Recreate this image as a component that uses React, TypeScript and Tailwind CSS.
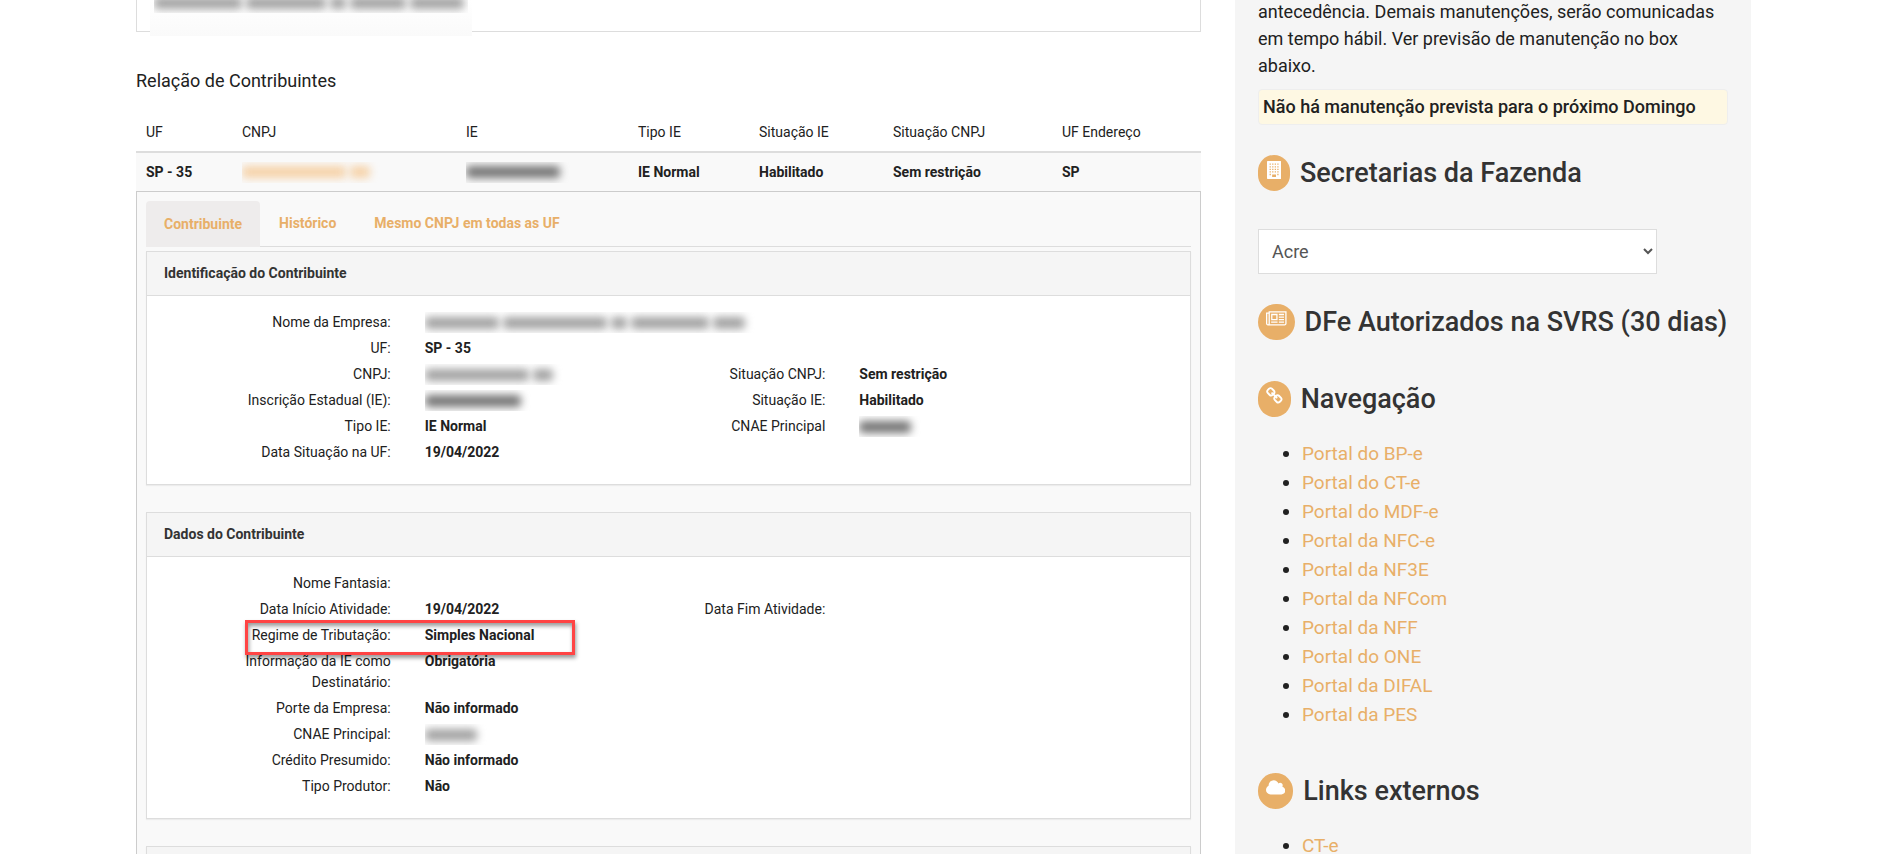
import React from 'react';

const columns = ['UF', 'CNPJ', 'IE', 'Tipo IE', 'Situação IE', 'Situação CNPJ', 'UF Endereço'];

const portals = [
  'Portal do BP-e',
  'Portal do CT-e',
  'Portal do MDF-e',
  'Portal da NFC-e',
  'Portal da NF3E',
  'Portal da NFCom',
  'Portal da NFF',
  'Portal do ONE',
  'Portal da DIFAL',
  'Portal da PES',
];

// Sidebar icons, all on the same 1792 unit tall grid
const icons = {
  building: {
    viewBox: '0 0 1408 1792',
    path: 'M64 0h1280q64 0 64 64v1664q0 64-64 64h-1280q-64 0-64-64v-1664q0-64 64-64zM256 256h128v128h-128zM512 256h128v128h-128zM768 256h128v128h-128zM1024 256h128v128h-128zM256 512h128v128h-128zM512 512h128v128h-128zM768 512h128v128h-128zM1024 512h128v128h-128zM256 768h128v128h-128zM512 768h128v128h-128zM768 768h128v128h-128zM1024 768h128v128h-128zM256 1024h128v128h-128zM512 1024h128v128h-128zM768 1024h128v128h-128zM1024 1024h128v128h-128zM256 1280h128v128h-128zM1024 1280h128v128h-128zM512 1344h384v256h-384z',
  },
  newspaper: {
    viewBox: '0 0 2048 1792',
    path: 'M1024 512h-384v384h384v-384zm128 640v128h-640v-128h640zm0-768v640h-640v-640h640zm640 768v128h-512v-128h512zm0-256v128h-512v-128h512zm0-256v128h-512v-128h512zm0-256v128h-512v-128h512zm-1536 960v-960h-128v960q0 26 19 45t45 19 45-19 19-45zm1664 0v-1088h-1536v1088q0 33-11 64h1483q26 0 45-19t19-45zm128-1216v1216q0 80-56 136t-136 56h-1664q-80 0-136-56t-56-136v-1088h256v-128h1792z',
  },
  link: {
    viewBox: '64 0 1664 1792',
    path: 'M1520 1216q0-40-28-68l-208-208q-28-28-68-28-42 0-72 32 3 3 19 18.5t21.5 21.5 15 19 13 25.5 3.5 27.5q0 40-28 68t-68 28q-15 0-27.5-3.5t-25.5-13-19-15-21.5-21.5-18.5-19q-33 31-33 73 0 40 28 68l206 207q27 27 68 27 40 0 68-26l147-146q28-28 28-67zm-703-705q0-40-28-68l-206-207q-28-28-68-28-39 0-68 27l-147 146q-28 28-28 67 0 40 28 68l208 208q27 27 68 27 42 0 72-31-3-3-19-18.5t-21.5-21.5-15-19-13-25.5-3.5-27.5q0-40 28-68t68-28q15 0 27.5 3.5t25.5 13 19 15 21.5 21.5 18.5 19q33-31 33-73zm895 705q0 120-85 203l-147 146q-83 83-203 83-121 0-204-85l-206-207q-83-83-83-203 0-123 88-209l-88-88q-86 88-208 88-120 0-204-84l-208-208q-84-84-84-204t85-203l147-146q83-83 203-83 121 0 204 85l206 207q83 83 83 203 0 123-88 209l88 88q86-88 208-88 120 0 204 84l208 208q84 84 84 204z',
  },
  cloud: {
    viewBox: '64 0 1920 1792',
    path: 'M1984 1152q0 159-112.5 271.5t-271.5 112.5h-1088q-185 0-316.5-131.5t-131.5-316.5q0-132 71-241.5t187-163.5q-2-28-2-43 0-212 150-362t362-150q158 0 286.5 88t187.5 230q70-62 166-62 106 0 181 75t75 181q0 75-41 138 129 30 213 134.5t84 239.5z',
  },
};

// Private values are drawn as blurred blocks, one block per word
const Redacted = ({ words, color = 'bg-neutral-500' }: { words: string[]; color?: string }) => (
  <span aria-hidden="true" className="flex h-[21px] items-center gap-1 overflow-hidden">
    {words.map((width, index) => (
      <span key={index} className={`h-3 rounded-sm blur-[4px] ${width} ${color}`} />
    ))}
  </span>
);

type FieldProps = {
  label: string;
  value?: React.ReactNode;
  label2?: string;
  value2?: React.ReactNode;
};

const Field = ({ label, value, label2, value2 }: FieldProps) => (
  <div className="mb-[5px] grid grid-cols-12">
    <dt className="col-span-3 pr-[17px] pl-10 text-right">{label}</dt>
    <dd className={`pl-[17px] font-bold ${label2 ? 'col-span-3' : 'col-span-9'}`}>{value}</dd>
    {label2 && <dt className="col-span-2 pr-[17px] text-right">{label2}</dt>}
    {label2 && <dd className="col-span-4 pl-[17px] font-bold">{value2}</dd>}
  </div>
);

const Panel = ({ title, children }: { title: string; children?: React.ReactNode }) => (
  <section className="mb-[27px] border border-[#dddddd] bg-white shadow-[0_1px_1px_rgba(0,0,0,0.05)]">
    <h3 className="border-b border-[#dddddd] bg-[#f5f5f5] px-[17px] py-[11px] font-bold text-[#333333]">
      {title}
    </h3>
    <dl className="py-4">{children}</dl>
  </section>
);

const SideHeading = ({ icon, children }: { icon: keyof typeof icons; children: React.ReactNode }) => (
  <h2 className="flex items-center gap-[10px] text-[27px] leading-9 font-medium whitespace-nowrap text-[#333333]">
    <span className="flex min-w-8 shrink-0 justify-center rounded-full bg-[#e8af68] px-2 pt-[6px] pb-[12px] text-white">
      <svg viewBox={icons[icon].viewBox} className="h-[18px] w-auto fill-current" fillRule="evenodd">
        <path d={icons[icon].path} />
      </svg>
    </span>
    {children}
  </h2>
);

const App = () => {
  return (
    <div className="flex h-screen items-start gap-[34px] overflow-hidden bg-white pr-[139px] pl-[136px] font-[Roboto,sans-serif] text-[#212121]">
      <main className="min-w-0 flex-1 text-[14px] leading-[21px]">
        {/* Search result box */}
        <div className="h-8 border border-t-0 border-[#dddddd] px-[13px]">
          <div className="flow-root h-9 w-[322px] bg-gradient-to-b from-white to-[#fafafa] px-1">
            <div className="-mt-2">
              <Redacted words={['w-[88px]', 'w-[80px]', 'w-4', 'w-[56px]', 'w-[54px]']} color="bg-neutral-400" />
            </div>
          </div>
        </div>

        <h1 className="mt-9 mb-7 text-[18px] leading-[26px]">Relação de Contribuintes</h1>

        <table className="w-full table-fixed text-left">
          <colgroup>
            <col className="w-[96px]" />
            <col className="w-[224px]" />
            <col className="w-[172px]" />
            <col className="w-[121px]" />
            <col className="w-[134px]" />
            <col className="w-[169px]" />
            <col className="w-[149px]" />
          </colgroup>
          <thead>
            <tr className="border-b-2 border-[#dddddd]">
              {columns.map((column) => (
                <th key={column} className="px-[10px] pb-2 font-normal">
                  {column}
                </th>
              ))}
            </tr>
          </thead>
          <tbody>
            <tr className="h-[39px] bg-[#f9f9f9] font-bold">
              <td className="px-[10px]">SP - 35</td>
              <td className="px-[10px]">
                <Redacted words={['w-[104px]', 'w-5']} color="bg-[#f6d2a8]" />
              </td>
              <td className="px-[10px]">
                <Redacted words={['w-[94px]']} />
              </td>
              <td className="px-[10px]">IE Normal</td>
              <td className="px-[10px]">Habilitado</td>
              <td className="px-[10px]">Sem restrição</td>
              <td className="px-[10px]">SP</td>
            </tr>
          </tbody>
        </table>

        {/* Contributor details */}
        <div className="border border-[#cccccc] bg-[#f9f9f9] px-[9px] pt-[9px]">
          <div role="tablist" className="mb-1 flex border-b border-[#dddddd] font-bold text-[#e8af68]">
            <button role="tab" aria-selected="true" className="-mb-px rounded-t bg-[#eeecec] px-[18px] py-3">
              Contribuinte
            </button>
            <button role="tab" aria-selected="false" className="px-[19px] py-3">
              Histórico
            </button>
            <button role="tab" aria-selected="false" className="px-[19px] py-3">
              Mesmo CNPJ em todas as UF
            </button>
          </div>

          <Panel title="Identificação do Contribuinte">
            <Field
              label="Nome da Empresa:"
              value={
                <Redacted
                  words={['w-[74px]', 'w-[104px]', 'w-4', 'w-[78px]', 'w-8']}
                  color="bg-neutral-400"
                />
              }
            />
            <Field label="UF:" value="SP - 35" />
            <Field
              label="CNPJ:"
              value={<Redacted words={['w-[104px]', 'w-5']} color="bg-neutral-400" />}
              label2="Situação CNPJ:"
              value2="Sem restrição"
            />
            <Field
              label="Inscrição Estadual (IE):"
              value={<Redacted words={['w-[96px]']} />}
              label2="Situação IE:"
              value2="Habilitado"
            />
            <Field
              label="Tipo IE:"
              value="IE Normal"
              label2="CNAE Principal"
              value2={<Redacted words={['w-[52px]']} />}
            />
            <Field label="Data Situação na UF:" value="19/04/2022" />
          </Panel>

          <Panel title="Dados do Contribuinte">
            <Field label="Nome Fantasia:" />
            <Field label="Data Início Atividade:" value="19/04/2022" label2="Data Fim Atividade:" />
            <div className="relative">
              <Field label="Regime de Tributação:" value="Simples Nacional" />
              {/* Highlight mark over the tax regime */}
              <div className="pointer-events-none absolute -top-[5px] left-[98px] h-[35px] w-[330px] border-[3px] border-[#ff4444] shadow-[1px_3px_4px_rgba(0,0,0,0.4),inset_1px_3px_4px_rgba(0,0,0,0.4)]" />
            </div>
            <Field label="Informação da IE como Destinatário:" value="Obrigatória" />
            <Field label="Porte da Empresa:" value="Não informado" />
            <Field label="CNAE Principal:" value={<Redacted words={['w-[52px]']} color="bg-neutral-400" />} />
            <Field label="Crédito Presumido:" value="Não informado" />
            <Field label="Tipo Produtor:" value="Não" />
          </Panel>

          <Panel title="" />
        </div>
      </main>

      <aside className="w-[516px] shrink-0 bg-[#f5f5f5] px-[23px] pb-6">
        <p className="-mt-[2px] text-[18px] leading-[27px]">
          antecedência. Demais manutenções, serão comunicadas em tempo hábil. Ver previsão de
          manutenção no box abaixo.
        </p>
        <div className="mt-[10px] mb-[30px] rounded-sm border border-[#eeeeee] bg-[#fef8e3] px-1 py-1 text-[18px] leading-[26px] font-medium">
          Não há manutenção prevista para o próximo Domingo
        </div>

        <SideHeading icon="building">Secretarias da Fazenda</SideHeading>
        <select
          aria-label="Secretaria da Fazenda"
          className="mt-[38px] mb-[30px] h-[45px] w-[399px] border border-[#dddddd] bg-white px-[9px] text-[18px] text-[#555555]"
        >
          <option>Acre</option>
        </select>

        <SideHeading icon="newspaper">DFe Autorizados na SVRS (30 dias)</SideHeading>
        <div className="h-[41px]" />
        <SideHeading icon="link">Navegação</SideHeading>
        <ul className="mt-[22px] mb-[44px] list-disc pl-11 text-[19px] leading-[29px]">
          {portals.map((portal) => (
            <li key={portal}>
              <a href="#" className="text-[#e8af68] hover:underline">
                {portal}
              </a>
            </li>
          ))}
        </ul>

        <SideHeading icon="cloud">Links externos</SideHeading>
        <ul className="mt-[22px] list-disc pl-11 text-[19px] leading-[29px]">
          <li>
            <a href="#" className="text-[#e8af68] hover:underline">
              CT-e
            </a>
          </li>
        </ul>
      </aside>
    </div>
  );
};

export default App;
